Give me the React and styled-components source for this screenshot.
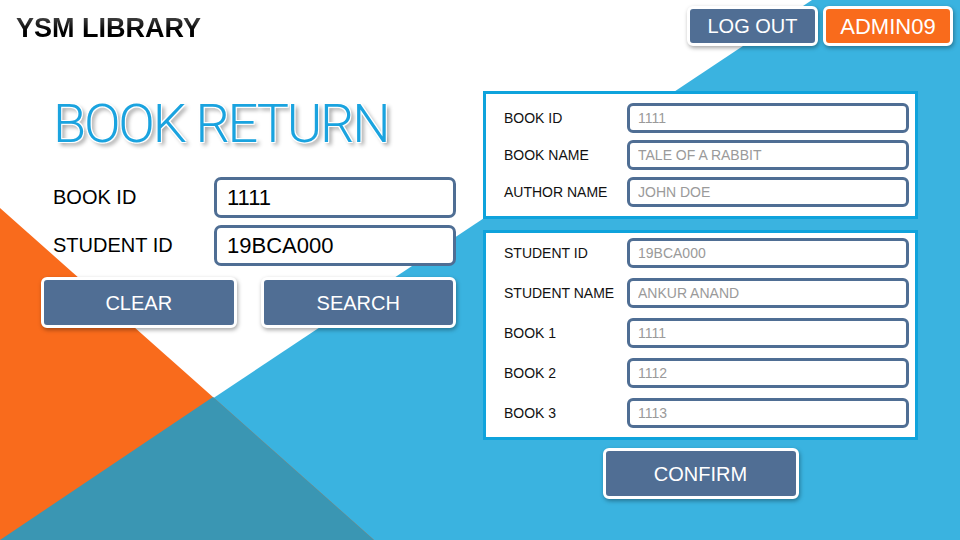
import React from 'react';
import styled, { createGlobalStyle } from 'styled-components';

const GlobalStyle = createGlobalStyle`
  html, body {
    margin: 0;
    padding: 0;
    background: #ffffff;
  }
  body {
    font-family: "Liberation Sans", Arial, sans-serif;
  }
  * {
    box-sizing: border-box;
  }
`;

const Page = styled.div`
  position: relative;
  width: 960px;
  height: 540px;
  overflow: hidden;
  background: #ffffff;
`;

const Backdrop = styled.svg`
  position: absolute;
  inset: 0;
  z-index: 0;
`;

const Content = styled.div`
  position: relative;
  z-index: 1;
`;

const Header = styled.header`
  display: flex;
  justify-content: space-between;
  align-items: flex-start;
  padding: 6px 7px 0 16px;
  height: 46px;
`;

const Brand = styled.div`
  margin-top: 7px;
  font-family: "Liberation Sans", Arial, sans-serif;
  font-weight: 700;
  font-size: 27px;
  line-height: 30px;
  color: #141414;
  background: linear-gradient(#555555, #000000 60%);
  -webkit-background-clip: text;
  background-clip: text;
  -webkit-text-fill-color: transparent;
`;

const HeaderActions = styled.div`
  display: flex;
  gap: 5px;
`;

const Button = styled.button`
  display: flex;
  align-items: center;
  justify-content: center;
  width: ${(p) => p.$w}px;
  height: ${(p) => p.$h}px;
  padding: 1px 0 0;
  border: 3px solid #ffffff;
  border-radius: 6px;
  background: ${(p) => (p.$accent ? '#f96b1c' : '#506e94')};
  color: #ffffff;
  font-family: "Liberation Sans", Arial, sans-serif;
  font-size: ${(p) => p.$fs || 20}px;
  box-shadow: 1px 2px 4px rgba(0, 0, 0, 0.35);
  cursor: pointer;
`;

const Main = styled.main`
  display: grid;
  grid-template-columns: 415px 435px;
  column-gap: 27px;
  margin-top: 45px;
  padding-left: 41px;
`;

const LeftColumn = styled.section`
  display: flex;
  flex-direction: column;
`;

const Title = styled.h1`
  margin: 6px 0 0 12px;
  font-family: Roboto, "Liberation Sans", sans-serif;
  font-weight: 300;
  font-size: 54px;
  line-height: 54px;
  letter-spacing: -2.2px;
  color: #1aa3df;
  text-shadow: -1px -1px 0 #fff, 1px -1px 0 #fff, -1px 1px 0 #fff, 1px 1px 0 #fff,
    3px 3px 4px rgba(0, 0, 0, 0.45);
`;

const Form = styled.div`
  display: flex;
  flex-direction: column;
  gap: 7px;
  margin-top: 26px;
`;

const FormRow = styled.label`
  display: grid;
  grid-template-columns: 173px 242px;
  align-items: center;
`;

const BigLabel = styled.span`
  padding-left: 12px;
  font-size: 20px;
  color: #000000;
`;

const BigInput = styled.input`
  height: 41px;
  width: 100%;
  padding: 0 0 0 10px;
  border: 3px solid #4f6e94;
  border-radius: 7px;
  background: #ffffff;
  font-family: "Liberation Sans", Arial, sans-serif;
  font-size: 22px;
  color: #000000;
  outline: none;
`;

const ButtonRow = styled.div`
  display: flex;
  gap: 24px;
  margin-top: 11px;
`;

const RightColumn = styled.section`
  display: flex;
  flex-direction: column;
  align-items: center;
`;

const Panel = styled.div`
  width: 100%;
  display: flex;
  flex-direction: column;
  gap: ${(p) => p.$gap}px;
  padding: ${(p) => p.$pad};
  border: 3px solid #0fa3dc;
  background: #ffffff;
  & + & {
    margin-top: 11px;
  }
`;

const Field = styled.label`
  display: grid;
  grid-template-columns: 123px 1fr;
  align-items: center;
`;

const SmallLabel = styled.span`
  font-size: 14px;
  color: #111111;
`;

const SmallInput = styled.input`
  height: 30px;
  width: 100%;
  padding: 0 0 0 8px;
  border: 3px solid #4f6e94;
  border-radius: 6px;
  background: #ffffff;
  font-family: "Liberation Sans", Arial, sans-serif;
  font-size: 14px;
  color: #000;
  outline: none;
  &::placeholder {
    color: #9a9a9a;
    opacity: 1;
  }
`;

const ConfirmWrap = styled.div`
  margin-top: 8px;
`;

const bookFields = [
  ['BOOK ID', '1111'],
  ['BOOK NAME', 'TALE OF A RABBIT'],
  ['AUTHOR NAME', 'JOHN DOE'],
];

const studentFields = [
  ['STUDENT ID', '19BCA000'],
  ['STUDENT NAME', 'ANKUR ANAND'],
  ['BOOK 1', '1111'],
  ['BOOK 2', '1112'],
  ['BOOK 3', '1113'],
];

export default function App() {
  return (
    <Page>
      <GlobalStyle />
      <Backdrop width="960" height="540" viewBox="0 0 960 540">
        <polygon points="812,0 960,0 960,540 0,540" fill="#3ab3e0" />
        <polygon points="0,208 374,540 0,540" fill="#f96b1c" />
        <polygon points="213,397 374,540 0,540" fill="#3a96b3" />
      </Backdrop>
      <Content>
        <Header>
          <Brand>YSM LIBRARY</Brand>
          <HeaderActions>
            <Button $w={131} $h={40}>LOG OUT</Button>
            <Button $w={130} $h={40} $fs={22} $accent>ADMIN09</Button>
          </HeaderActions>
        </Header>
        <Main>
          <LeftColumn>
            <Title>BOOK RETURN</Title>
            <Form>
              <FormRow>
                <BigLabel>BOOK ID</BigLabel>
                <BigInput defaultValue="1111" />
              </FormRow>
              <FormRow>
                <BigLabel>STUDENT ID</BigLabel>
                <BigInput defaultValue="19BCA000" />
              </FormRow>
            </Form>
            <ButtonRow>
              <Button $w={196} $h={51}>CLEAR</Button>
              <Button $w={196} $h={51}>SEARCH</Button>
            </ButtonRow>
          </LeftColumn>
          <RightColumn>
            <Panel $gap={7} $pad="9px 6px 9px 18px">
              {bookFields.map(([label, hint]) => (
                <Field key={label}>
                  <SmallLabel>{label}</SmallLabel>
                  <SmallInput placeholder={hint} />
                </Field>
              ))}
            </Panel>
            <Panel $gap={10} $pad="5px 6px 9px 18px">
              {studentFields.map(([label, hint]) => (
                <Field key={label}>
                  <SmallLabel>{label}</SmallLabel>
                  <SmallInput placeholder={hint} />
                </Field>
              ))}
            </Panel>
            <ConfirmWrap>
              <Button $w={196} $h={51}>CONFIRM</Button>
            </ConfirmWrap>
          </RightColumn>
        </Main>
      </Content>
    </Page>
  );
}
